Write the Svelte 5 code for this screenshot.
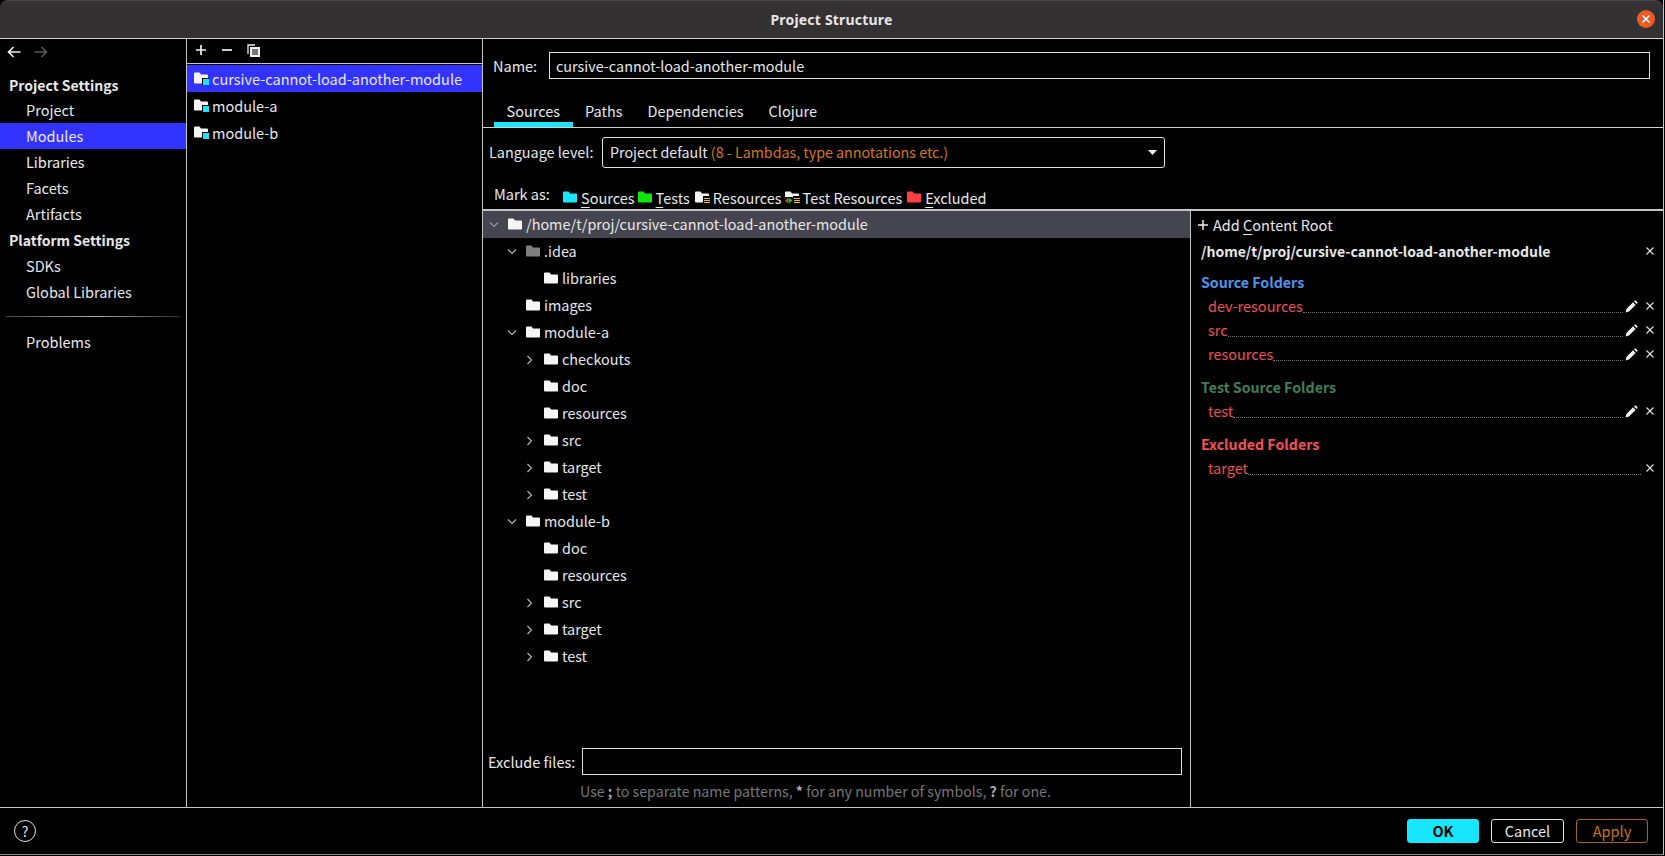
<script>
  const sideItems = [
    { t: 'Project Settings', h: true },
    { t: 'Project' },
    { t: 'Modules', sel: true },
    { t: 'Libraries' },
    { t: 'Facets' },
    { t: 'Artifacts' },
    { t: 'Platform Settings', h: true },
    { t: 'SDKs' },
    { t: 'Global Libraries' }
  ];
  const modules = ['cursive-cannot-load-another-module', 'module-a', 'module-b'];
  const tree = [
    { t: '/home/t/proj/cursive-cannot-load-another-module', l: 0, c: 'open', sel: true },
    { t: '.idea', l: 1, c: 'open', grey: true },
    { t: 'libraries', l: 2 },
    { t: 'images', l: 1 },
    { t: 'module-a', l: 1, c: 'open' },
    { t: 'checkouts', l: 2, c: 'closed' },
    { t: 'doc', l: 2 },
    { t: 'resources', l: 2 },
    { t: 'src', l: 2, c: 'closed' },
    { t: 'target', l: 2, c: 'closed' },
    { t: 'test', l: 2, c: 'closed' },
    { t: 'module-b', l: 1, c: 'open' },
    { t: 'doc', l: 2 },
    { t: 'resources', l: 2 },
    { t: 'src', l: 2, c: 'closed' },
    { t: 'target', l: 2, c: 'closed' },
    { t: 'test', l: 2, c: 'closed' }
  ];
  const groups = [
    { title: 'Source Folders', cls: 'blue', items: ['dev-resources', 'src', 'resources'], edit: true },
    { title: 'Test Source Folders', cls: 'green', items: ['test'], edit: true },
    { title: 'Excluded Folders', cls: 'red', items: ['target'], edit: false }
  ];
  const folderPath = 'M0 1.5A1 1 0 0 1 1 .5H5.5L7 2.5H13A1 1 0 0 1 14 3.5V10.5A1 1 0 0 1 13 11.500H1A1 1 0 0 1 0 10.500Z';
</script>

{#snippet folder(color, extra)}
  <svg class="folder" width="15" height="13" viewBox="0 0 15 13">
    <path d={folderPath} fill={color} />
    {#if extra === 'module'}
      <rect x="8" y="6" width="7" height="7" fill="#000" />
      <rect x="9" y="7" width="6" height="6" fill="#18e6ff" />
    {:else if extra === 'res'}
      <rect x="8" y="5" width="7" height="8" fill="#000" />
      <path d="M9 7.500H15M9 9.500H15M9 11.500H15" stroke="#f5b81e" stroke-width="1" />
    {:else if extra === 'testres'}
      <rect x="8" y="5" width="7" height="8" fill="#000" />
      <path d="M9 7.500H15M9 9.500H15M9 11.500H15" stroke="#f5b81e" stroke-width="1" />
      <rect x="0" y="6" width="8" height="7" fill="#000" />
      <path d="M0 9.500L3 6.500V12.500Z" fill="#e53935" />
      <path d="M3.500 6.500L7.500 9.500L3.500 12.500Z" fill="#19c832" />
    {/if}
  </svg>
{/snippet}

{#snippet closeX()}
  <svg class="act" width="10" height="10" viewBox="0 0 10 10"><path d="M1.500 1.500L8.500 8.500M8.500 1.500L1.500 8.500" stroke="#e4e4e4" stroke-width="1.100" fill="none" /></svg>
{/snippet}

{#snippet pencil()}
  <svg class="act pen" width="13" height="13" viewBox="0 0 11 11"><path d="M0.500 10.500L1.200 7.600L6.800 2L9 4.200L3.400 9.800ZM7.600 1.200L8.400 0.500Q8.800 0.200 9.200 0.500L10.500 1.800Q10.800 2.200 10.500 2.600L9.800 3.400Z" fill="#f2f2f2" /></svg>
{/snippet}

<div class="window">
  <header class="titlebar">
    <span class="title">Project Structure</span>
    <span class="closebtn">
      <svg width="16" height="16" viewBox="0 0 16 16"><path d="M4.500 4.500L11.500 11.500M11.500 4.500L4.500 11.500" stroke="#fff" stroke-width="1.600" /></svg>
    </span>
  </header>

  <div class="body">
    <nav class="side">
      <div class="arrows">
        <svg width="14" height="12" viewBox="0 0 14 12"><path d="M13.500 6H2M6.500 1L1.500 6L6.500 11" stroke="#f0f0f0" stroke-width="1.600" fill="none" /></svg>
        <svg width="14" height="12" viewBox="0 0 14 12"><path d="M.5 6H12M7.500 1L12.500 6L7.500 11" stroke="#5a5a5a" stroke-width="1.600" fill="none" /></svg>
      </div>
      {#each sideItems as it}
        <div class="sitem" class:head={it.h} class:sel={it.sel}>{it.t}</div>
      {/each}
      <div class="sep"></div>
      <div class="sitem">Problems</div>
    </nav>

    <section class="mods">
      <div class="toolbar">
        <svg width="12" height="12" viewBox="0 0 12 12"><path d="M6 1V11M1 6H11" stroke="#f0f0f0" stroke-width="1.700" /></svg>
        <svg width="12" height="12" viewBox="0 0 12 12"><path d="M1 6H11" stroke="#f0f0f0" stroke-width="1.700" /></svg>
        <svg width="13" height="13" viewBox="0 0 13 13"><path d="M1 10V1H8" stroke="#f0f0f0" stroke-width="1.300" fill="none" /><rect x="3" y="3" width="10" height="10" fill="#f0f0f0" /><path d="M5 6H11M5 8H11M5 10H11" stroke="#000" stroke-width="1" /></svg>
      </div>
      <div class="modlist">
        {#each modules as m, i}
          <div class="mod" class:sel={i === 0}>
            {@render folder('#f5f5f5', 'module')}
            <span>{m}</span>
          </div>
        {/each}
      </div>
    </section>

    <main class="main">
      <div class="namerow">
        <label for="nm">Name:</label>
        <input id="nm" class="box" value="cursive-cannot-load-another-module" readonly />
      </div>
      <div class="tabs">
        <span class="tab on">Sources</span>
        <span class="tab">Paths</span>
        <span class="tab">Dependencies</span>
        <span class="tab">Clojure</span>
      </div>
      <div class="langrow">
        <span class="langlabel">Language level:</span>
        <div class="combo">
          <span>Project default <em>(8 - Lambdas, type annotations etc.)</em></span>
          <svg width="9" height="5" viewBox="0 0 9 5"><path d="M0 0H9L4.500 5Z" fill="#f0f0f0" /></svg>
        </div>
      </div>
      <div class="markrow">
        <span class="marklabel">Mark as:</span>
        <span class="mark">{@render folder('#18e6ff', '')}<span><u>S</u>ources</span></span>
        <span class="mark wide">{@render folder('#0fe60f', '')}<span><u>T</u>ests</span></span>
        <span class="mark">{@render folder('#f5f5f5', 'res')}<span>Resources</span></span>
        <span class="mark wide">{@render folder('#f5f5f5', 'testres')}<span>Test Resources</span></span>
        <span class="mark">{@render folder('#ff4040', '')}<span><u>E</u>xcluded</span></span>
      </div>

      <div class="split">
        <div class="left">
          <div class="tree">
            {#each tree as n}
              <div class="node" class:sel={n.sel} style="padding-left: {n.l * 18 + 6}px">
                <span class="chev">
                  {#if n.c === 'open'}
                    <svg width="10" height="6" viewBox="0 0 10 6"><path d="M1 .5L5 4.500L9 .5" stroke={n.sel ? '#9a9aa2' : '#b8b8b8'} stroke-width="1.100" fill="none" /></svg>
                  {:else if n.c === 'closed'}
                    <svg width="6" height="10" viewBox="0 0 6 10"><path d="M.5 1L4.500 5L.5 9" stroke="#b8b8b8" stroke-width="1.100" fill="none" /></svg>
                  {/if}
                </span>
                {@render folder(n.grey ? '#7f7f7f' : '#f5f5f5', '')}
                <span class="ntext">{n.t}</span>
              </div>
            {/each}
          </div>
          <div class="exclude">
            <span class="exlabel">Exclude files:</span>
            <div class="box exbox"></div>
          </div>
          <div class="hint">Use <b>;</b> to separate name patterns, <b>*</b> for any number of symbols, <b>?</b> for one.</div>
        </div>

        <aside class="right">
          <div class="addroot">
            <svg width="10" height="10" viewBox="0 0 10 10"><path d="M5 0V10M0 5H10" stroke="#f0f0f0" stroke-width="1.500" /></svg>
            <span>Add <u>C</u>ontent Root</span>
          </div>
          <div class="rootpath"><span>/home/t/proj/cursive-cannot-load-another-module</span>{@render closeX()}</div>
          {#each groups as g}
            <div class="ghead {g.cls}">{g.title}</div>
            {#each g.items as item}
              <div class="gitem">
                <span class="gname">{item}</span>
                <span class="dots" class:long={!g.edit}></span>
                {#if g.edit}{@render pencil()}{/if}
                {@render closeX()}
              </div>
            {/each}
          {/each}
        </aside>
      </div>
    </main>
  </div>

  <footer class="footer">
    <span class="help">?</span>
    <div class="btns">
      <span class="btn ok">OK</span>
      <span class="btn cancel">Cancel</span>
      <span class="btn apply">Apply</span>
    </div>
  </footer>
</div>

<style>
  :global(body) {
    margin: 0;
    background: #000;
  }
  .window {
    width: 1664px;
    height: 855px;
    box-sizing: border-box;
    display: flex;
    flex-direction: column;
    background: #000;
    color: #e8e8e8;
    font: 14.500px/20px "Noto Sans CJK SC", "Noto Sans", sans-serif;
    border-right: 1px solid #c4c4c4;
    border-bottom: 1px solid #8a8a8a;
    overflow: hidden;
  }
  .titlebar {
    height: 39px;
    flex: none;
    box-sizing: border-box;
    background: #333131;
    border-top: 1px solid #4a4a4a;
    border-bottom: 1px solid #cfcfcf;
    border-radius: 8px 8px 0 0;
    display: flex;
    align-items: center;
    justify-content: center;
    position: relative;
  }
  .title {
    font: 700 14px/20px "Noto Sans", sans-serif;
    color: #e6e6e6;
    letter-spacing: 0.2px;
  }
  .closebtn {
    position: absolute;
    right: 8px;
    top: 9px;
    width: 18px;
    height: 18px;
    border-radius: 50%;
    background: #ee5a24;
    display: flex;
    align-items: center;
    justify-content: center;
  }
  .body {
    flex: 1;
    min-height: 0;
    display: flex;
    border-bottom: 1px solid #c4c4c4;
  }
  .side {
    width: 187px;
    flex: none;
    box-sizing: border-box;
    border-right: 1px solid #c4c4c4;
  }
  .arrows {
    display: flex;
    gap: 13px;
    padding: 7px 0 0 7px;
    height: 25px;
    box-sizing: border-box;
    margin-bottom: 8px;
  }
  .sitem {
    height: 26px;
    line-height: 26px;
    padding-left: 26px;
  }
  .sitem.head {
    padding-left: 9px;
    font-weight: 700;
    font-size: 14px;
  }
  .arrows + .sitem {
    height: 25px;
  }
  .sitem.sel {
    background: #3333ff;
  }
  .sep {
    height: 1px;
    margin: 11px 6px 12px 6px;
    background: linear-gradient(90deg, #444, #aaa 50%, #333);
  }
  .mods {
    width: 296px;
    flex: none;
    box-sizing: border-box;
    border-right: 1px solid #c4c4c4;
  }
  .toolbar {
    height: 25px;
    box-sizing: border-box;
    border-bottom: 1px solid #c4c4c4;
    display: flex;
    align-items: center;
    gap: 14px;
    padding: 0 0 2px 8px;
  }
  .modlist {
    padding-top: 1px;
  }
  .mod {
    height: 27px;
    display: flex;
    align-items: center;
    gap: 3px;
    padding-left: 7px;
  }
  .mod.sel {
    background: #3333ff;
  }
  .main {
    flex: 1;
    min-width: 0;
    display: flex;
    flex-direction: column;
  }
  .namerow {
    height: 51px;
    flex: none;
    box-sizing: border-box;
    padding: 13px 13px 0 10px;
    display: flex;
    align-items: flex-start;
  }
  .namerow label {
    width: 56px;
    flex: none;
    line-height: 27px;
  }
  .box {
    box-sizing: border-box;
    height: 27px;
    border: 1px solid #e0e0e0;
    background: #000;
    outline: none;
  }
  input.box {
    flex: 1;
    padding: 0 6px;
    color: #e8e8e8;
    font: inherit;
    font-size: 14.400px;
  }
  .tabs {
    height: 38px;
    flex: none;
    box-sizing: border-box;
    display: flex;
    padding-left: 11px;
    border-bottom: 1px solid #d0d0d0;
  }
  .tab {
    padding: 11px 12.500px 0;
    line-height: 20px;
  }
  .tab.on {
    border-bottom: 5px solid #18e6ff;
    height: 37px;
    box-sizing: border-box;
  }
  .langrow {
    height: 50px;
    flex: none;
    box-sizing: border-box;
    padding: 9px 0 0 6px;
    display: flex;
    align-items: flex-start;
  }
  .langlabel {
    width: 113px;
    flex: none;
    line-height: 30px;
    font-size: 14.400px;
  }
  .combo {
    width: 563px;
    height: 31px;
    box-sizing: border-box;
    border: 1px solid #e0e0e0;
    border-radius: 3px;
    padding: 0 7px 2px;
    display: flex;
    align-items: center;
    justify-content: space-between;
    font-size: 14.250px;
  }
  .combo svg {
    margin-top: 2px;
  }
  .combo em {
    font-style: normal;
    color: #d8780c;
  }
  .markrow {
    height: 33px;
    flex: none;
    box-sizing: border-box;
    padding: 6px 0 0 11px;
    display: flex;
    align-items: flex-start;
    border-bottom: 2px solid #c4c4c4;
  }
  .marklabel {
    width: 69px;
    flex: none;
  }
  .mark {
    display: flex;
    align-items: flex-start;
    gap: 3px;
    margin-right: 3px;
  }
  .mark.wide {
    margin-right: 5px;
  }
  .mark > span {
    margin-top: 4px;
  }
  .mark > .folder {
    margin-top: 7px;
  }
  .mark u {
    text-underline-offset: 3px;
  }
  .split {
    flex: 1;
    min-height: 0;
    display: flex;
  }
  .left {
    width: 708px;
    flex: none;
    box-sizing: border-box;
    border-right: 1px solid #c4c4c4;
    display: flex;
    flex-direction: column;
  }
  .tree {
    flex: 1;
    min-height: 0;
    font-size: 14.400px;
  }
  .node {
    height: 27px;
    display: flex;
    align-items: center;
    box-sizing: border-box;
  }
  .node.sel {
    background: #45454f;
  }
  .chev {
    width: 18px;
    flex: none;
    box-sizing: border-box;
    padding-right: 8px;
    display: flex;
    justify-content: center;
    margin-right: 1px;
  }
  .folder {
    flex: none;
  }
  .ntext {
    margin-left: 3px;
    margin-bottom: 2px;
  }
  .exclude {
    display: flex;
    align-items: center;
    height: 27px;
    flex: none;
    padding-left: 5px;
    gap: 9px;
  }
  .exlabel {
    width: 85px;
    white-space: nowrap;
  }
  .exbox {
    width: 600px;
  }
  .hint {
    height: 32px;
    flex: none;
    line-height: 32px;
    padding-left: 97px;
    color: #777;
    font-size: 14.200px;
  }
  .hint b {
    color: #aaa;
  }
  .right {
    flex: 1;
    min-width: 0;
    padding: 1px 8px 0 10px;
  }
  .addroot {
    height: 25px;
    margin-bottom: 2px;
    display: flex;
    align-items: center;
    gap: 5px;
    margin-left: -3px;
  }
  .addroot u {
    text-underline-offset: 3px;
  }
  .rootpath {
    height: 24px;
    margin-bottom: -2px;
    display: flex;
    align-items: center;
    justify-content: space-between;
    font-weight: 700;
    font-size: 14px;
  }
  .ghead {
    height: 24px;
    line-height: 24px;
    margin-top: 9px;
    font-weight: 700;
    font-size: 14.200px;
  }
  .ghead.blue { color: #4f94ee; }
  .ghead.green { color: #3f7f54; }
  .ghead.red { color: #f55252; }
  .gitem {
    height: 24px;
    display: flex;
    align-items: center;
    padding-left: 7px;
    color: #f04f4f;
  }
  .dots {
    flex: 1;
    align-self: flex-end;
    margin-bottom: 5px;
    border-bottom: 1px dotted #777;
  }
  .dots.long {
    margin-right: -3px;
  }
  .act {
    flex: none;
    margin-left: 7px;
  }
  .act.pen {
    margin-left: 2px;
  }
  .footer {
    height: 46px;
    flex: none;
    box-sizing: border-box;
    display: flex;
    align-items: center;
    justify-content: space-between;
    padding: 0 15px 0 14px;
  }
  .help {
    width: 22px;
    height: 22px;
    box-sizing: border-box;
    border: 1px solid #e0e0e0;
    border-radius: 50%;
    display: flex;
    align-items: center;
    justify-content: center;
    font-size: 14px;
  }
  .btns {
    display: flex;
    gap: 12px;
  }
  .btn {
    width: 73px;
    height: 24px;
    box-sizing: border-box;
    border-radius: 3px;
    display: flex;
    align-items: center;
    justify-content: center;
    border: 1px solid #e0e0e0;
  }
  .btn.ok {
    width: 72px;
    background: #18e6ff;
    border-color: #18e6ff;
    color: #000;
    font-weight: 700;
  }
  .btn.apply {
    width: 72px;
    border-color: #a9651a;
    color: #c8740f;
  }
</style>
